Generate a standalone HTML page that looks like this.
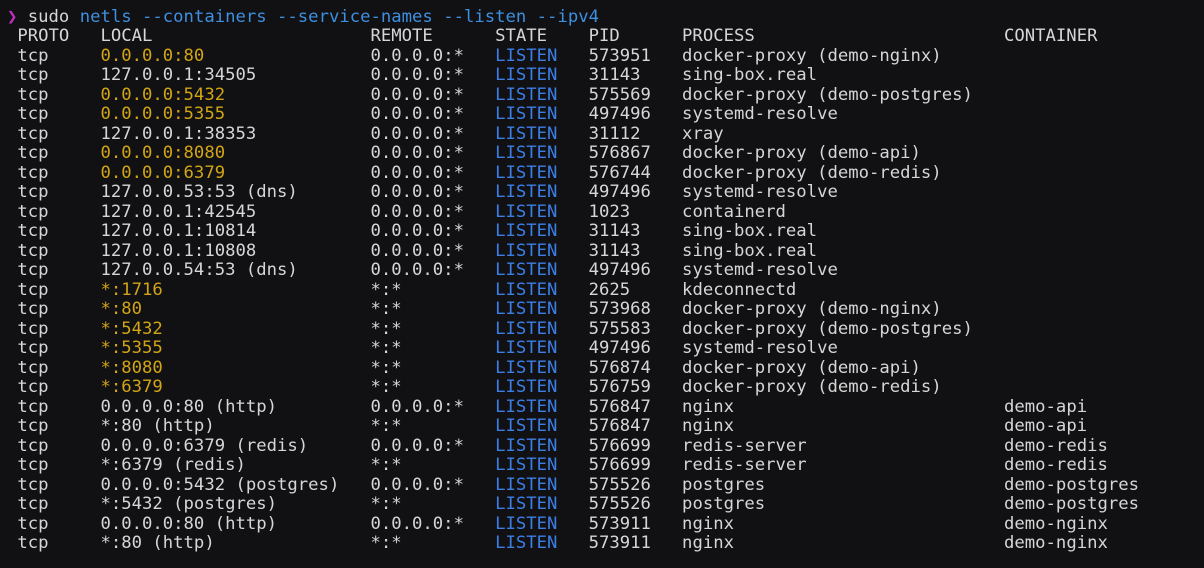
<!DOCTYPE html>
<html><head><meta charset="utf-8"><style>
html,body{margin:0;padding:0;background:#111113;width:1204px;height:568px;overflow:hidden}
pre{position:absolute;left:7px;top:8px;margin:0;font-family:"DejaVu Sans Mono","Liberation Mono",monospace;font-size:17.25px;line-height:19.48px;color:#d6d6d6;white-space:pre}
.m{color:#c030c0}.b{color:#3d8fe0}.y{color:#d2a514}.s{color:#3b7fe6}
</style></head><body><pre><span class="m">❯</span> sudo <span class="b">netls --containers --service-names --listen --ipv4</span>
 PROTO   LOCAL                     REMOTE      STATE    PID      PROCESS                        CONTAINER
 tcp     <span class="y">0.0.0.0:80</span>                0.0.0.0:*   <span class="s">LISTEN</span>   573951   docker-proxy (demo-nginx)
 tcp     127.0.0.1:34505           0.0.0.0:*   <span class="s">LISTEN</span>   31143    sing-box.real
 tcp     <span class="y">0.0.0.0:5432</span>              0.0.0.0:*   <span class="s">LISTEN</span>   575569   docker-proxy (demo-postgres)
 tcp     <span class="y">0.0.0.0:5355</span>              0.0.0.0:*   <span class="s">LISTEN</span>   497496   systemd-resolve
 tcp     127.0.0.1:38353           0.0.0.0:*   <span class="s">LISTEN</span>   31112    xray
 tcp     <span class="y">0.0.0.0:8080</span>              0.0.0.0:*   <span class="s">LISTEN</span>   576867   docker-proxy (demo-api)
 tcp     <span class="y">0.0.0.0:6379</span>              0.0.0.0:*   <span class="s">LISTEN</span>   576744   docker-proxy (demo-redis)
 tcp     127.0.0.53:53 (dns)       0.0.0.0:*   <span class="s">LISTEN</span>   497496   systemd-resolve
 tcp     127.0.0.1:42545           0.0.0.0:*   <span class="s">LISTEN</span>   1023     containerd
 tcp     127.0.0.1:10814           0.0.0.0:*   <span class="s">LISTEN</span>   31143    sing-box.real
 tcp     127.0.0.1:10808           0.0.0.0:*   <span class="s">LISTEN</span>   31143    sing-box.real
 tcp     127.0.0.54:53 (dns)       0.0.0.0:*   <span class="s">LISTEN</span>   497496   systemd-resolve
 tcp     <span class="y">*:1716</span>                    *:*         <span class="s">LISTEN</span>   2625     kdeconnectd
 tcp     <span class="y">*:80</span>                      *:*         <span class="s">LISTEN</span>   573968   docker-proxy (demo-nginx)
 tcp     <span class="y">*:5432</span>                    *:*         <span class="s">LISTEN</span>   575583   docker-proxy (demo-postgres)
 tcp     <span class="y">*:5355</span>                    *:*         <span class="s">LISTEN</span>   497496   systemd-resolve
 tcp     <span class="y">*:8080</span>                    *:*         <span class="s">LISTEN</span>   576874   docker-proxy (demo-api)
 tcp     <span class="y">*:6379</span>                    *:*         <span class="s">LISTEN</span>   576759   docker-proxy (demo-redis)
 tcp     0.0.0.0:80 (http)         0.0.0.0:*   <span class="s">LISTEN</span>   576847   nginx                          demo-api
 tcp     *:80 (http)               *:*         <span class="s">LISTEN</span>   576847   nginx                          demo-api
 tcp     0.0.0.0:6379 (redis)      0.0.0.0:*   <span class="s">LISTEN</span>   576699   redis-server                   demo-redis
 tcp     *:6379 (redis)            *:*         <span class="s">LISTEN</span>   576699   redis-server                   demo-redis
 tcp     0.0.0.0:5432 (postgres)   0.0.0.0:*   <span class="s">LISTEN</span>   575526   postgres                       demo-postgres
 tcp     *:5432 (postgres)         *:*         <span class="s">LISTEN</span>   575526   postgres                       demo-postgres
 tcp     0.0.0.0:80 (http)         0.0.0.0:*   <span class="s">LISTEN</span>   573911   nginx                          demo-nginx
 tcp     *:80 (http)               *:*         <span class="s">LISTEN</span>   573911   nginx                          demo-nginx</pre></body></html>
